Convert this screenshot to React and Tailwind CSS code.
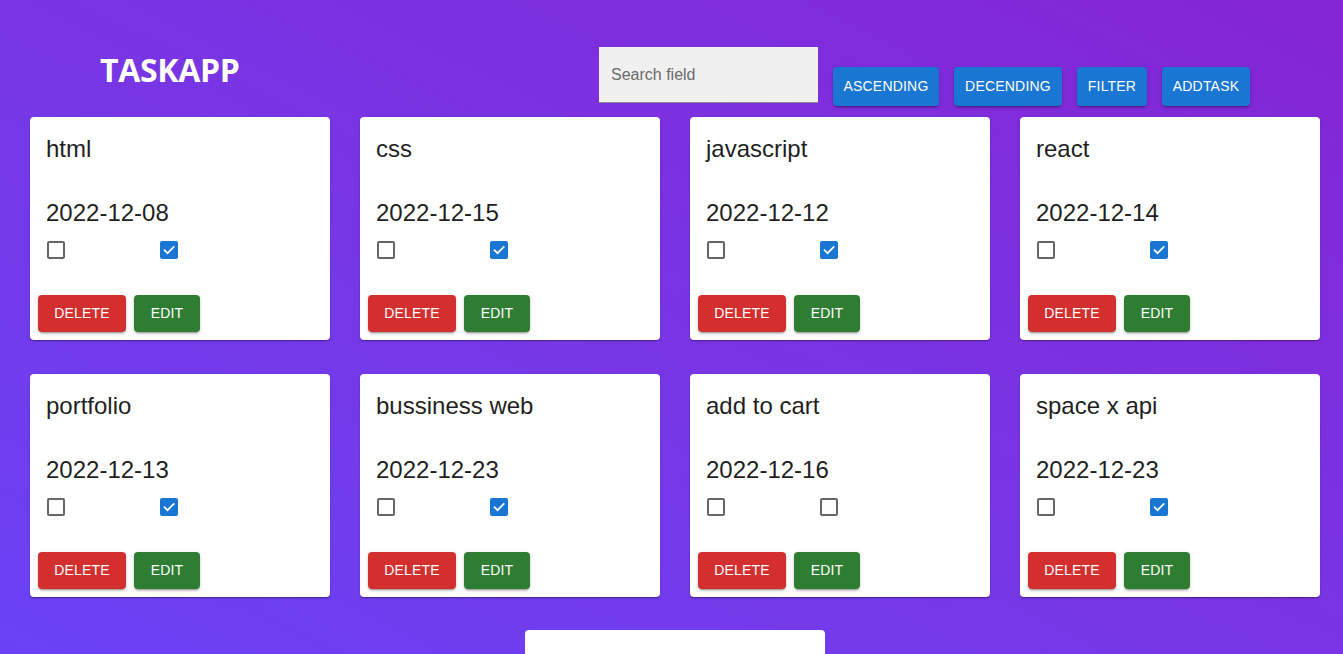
import React from "react";

const tasks = [
  { title: "html", date: "2022-12-08", a: false, b: true },
  { title: "css", date: "2022-12-15", a: false, b: true },
  { title: "javascript", date: "2022-12-12", a: false, b: true },
  { title: "react", date: "2022-12-14", a: false, b: true },
  { title: "portfolio", date: "2022-12-13", a: false, b: true },
  { title: "bussiness web", date: "2022-12-23", a: false, b: true },
  { title: "add to cart", date: "2022-12-16", a: false, b: false },
  { title: "space x api", date: "2022-12-23", a: false, b: true },
];

function Box({ checked }) {
  if (checked) {
    return (
      <span className="w-[18px] h-[18px] rounded-[2px] bg-[#1976d2] flex items-center justify-center">
        <svg width="14" height="14" viewBox="0 0 24 24" fill="none">
          <path d="M4.5 12.5l5 5L20 7" stroke="white" strokeWidth="3" strokeLinecap="square" />
        </svg>
      </span>
    );
  }
  return <span className="w-[18px] h-[18px] rounded-[2px] border-2 border-[#666666] bg-white" />;
}

function Btn({ children, className }) {
  return (
    <button
      className={
        "flex items-center justify-center rounded text-white text-[14px] font-normal uppercase tracking-[0.2px] shadow-[0_3px_1px_-2px_rgba(0,0,0,0.2),0_2px_2px_0_rgba(0,0,0,0.14),0_1px_5px_0_rgba(0,0,0,0.12)] " +
        className
      }
      style={{ fontFamily: "'Liberation Sans', Arial, sans-serif" }}
    >
      {children}
    </button>
  );
}

function Card({ t }) {
  return (
    <div className="w-[300px] h-[223px] bg-white rounded shadow-[0_2px_1px_-1px_rgba(0,0,0,0.2),0_1px_1px_0_rgba(0,0,0,0.14),0_1px_3px_0_rgba(0,0,0,0.12)] flex flex-col">
      <div className="px-4 pt-4 text-[24px] leading-[32px] text-[#1f1f1f]" style={{ fontFamily: "'Liberation Sans', Arial, sans-serif" }}>
        <div>{t.title}</div>
        <div className="mt-8">{t.date}</div>
        <div className="flex items-center mt-3 pl-[1px]">
          <Box checked={t.a} />
          <span className="w-[95px]" />
          <Box checked={t.b} />
        </div>
      </div>
      <div className="mt-auto flex gap-2 p-2">
        <Btn className="h-[37px] bg-[#d32f2f] w-[88px]">Delete</Btn>
        <Btn className="h-[37px] bg-[#2e7d32] w-[66px]">Edit</Btn>
      </div>
    </div>
  );
}

export default function App() {
  return (
    <div className="h-screen w-full overflow-hidden bg-gradient-to-tr from-[#6a42f5] to-[#8424d4]">
      <div className="flex items-start h-[104px]">
        <div
          className="ml-[100px] mt-[50px] w-[140px] text-white font-bold text-[32px] leading-[40px] tracking-[-0.3px] whitespace-nowrap"
          style={{ fontFamily: "'Open Sans', sans-serif" }}
        >
          TASKAPP
        </div>
        <div className="ml-[359px] mt-[47px] w-[219px] h-[56px] bg-[#f0f0f0] border-b border-[#8a8a8a] flex items-center pl-3 text-[16px] text-[#6b6b6b]" style={{ fontFamily: "'Liberation Sans', Arial, sans-serif" }}>
          Search field
        </div>
        <div className="flex gap-[15px] ml-[15px] mt-[67px]">
          <Btn className="h-[39px] bg-[#1976d2] w-[106px]">Ascending</Btn>
          <Btn className="h-[39px] bg-[#1976d2] w-[108px]">Decending</Btn>
          <Btn className="h-[39px] bg-[#1976d2] w-[70px]">Filter</Btn>
          <Btn className="h-[39px] bg-[#1976d2] w-[88px]">Addtask</Btn>
        </div>
      </div>
      <div className="grid grid-cols-[repeat(4,300px)] gap-x-[30px] gap-y-[34px] pl-[30px] mt-[13px]">
        {tasks.map((t) => (
          <Card key={t.title} t={t} />
        ))}
      </div>
      <div className="ml-[525px] mt-[33px] w-[300px] h-[200px] bg-white rounded px-[25px] pt-[16px] text-[24px] text-[rgba(0,0,0,0.87)]" style={{ fontFamily: "'Liberation Sans', Arial, sans-serif" }}>
        Add task
      </div>
    </div>
  );
}
